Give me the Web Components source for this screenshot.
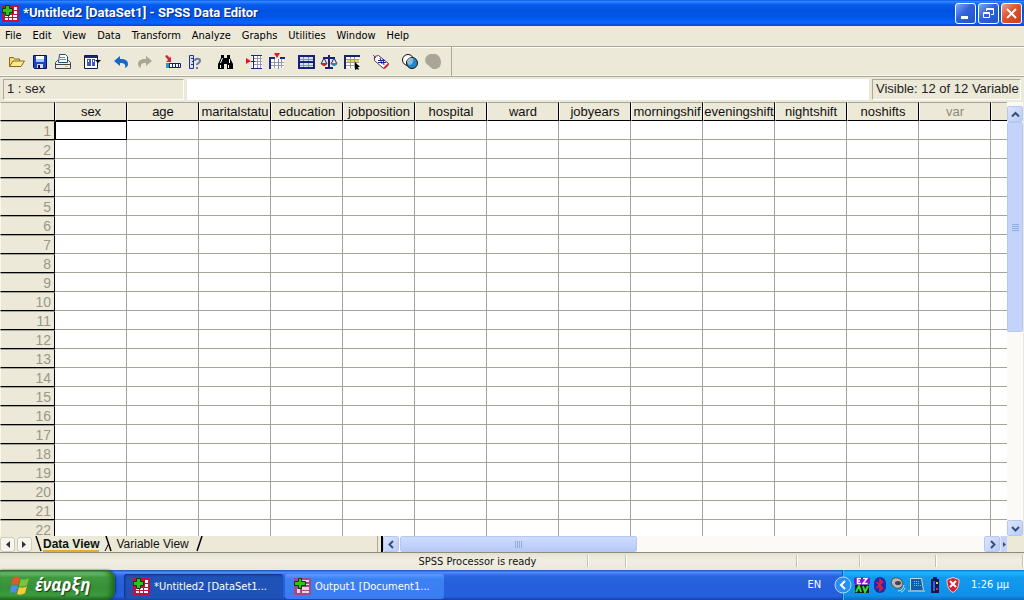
<!DOCTYPE html>
<html lang="en">
<head>
<meta charset="utf-8">
<title>SPSS Data Editor</title>
<style>
html, body { margin: 0; height: 100%; }
body { overflow: hidden; background: #ece9d8; }
</style>
</head>
<body>
<data-editor></data-editor>
<script>
const BASE = `*{box-sizing:border-box} button,input{font:inherit;color:inherit;margin:0;padding:0;border:0;background:none;border-radius:0} svg{display:block;flex:none}`;
function define(name, css, html) {
  customElements.define(name, class extends HTMLElement {
    constructor() {
      super();
      const t = document.createElement('template');
      t.innerHTML = `<style>${BASE}${css}</style>${typeof html === 'function' ? html(this) : html}`;
      this.attachShadow({ mode: 'open' }).append(t.content.cloneNode(true));
    }
  });
}

const APP = `<svg width="17" height="17" viewBox="0 0 17 17"><path fill="#c3113c" d="M0 0h17v17H0z"/><path fill="#fff" d="M3 10h3v2H3zM7 10h3v2H7zM11 10h4v2h-4zM3 13h3v2H3zM7 13h3v2H7zM11 13h4v2h-4zM12 6h3v3h-3zM12 2h3v3h-3z"/><path fill="#2ec41c" stroke="#063a06" d="M3.500.5h4v3h3v4h-3v3h-4v-3h-3v-4h3z"/></svg>`;
const OUT = `<svg width="17" height="17" viewBox="0 0 17 17"><path fill="#a04a88" d="M0 0h17v17H0z"/><path fill="#f6cfe0" d="M8 2h7v2H8zM11 6h4v1h-4zM3 11h3v4H3zM8 9h7v3H8zM8 13h7v2H8z"/><path fill="#2ec41c" stroke="#063a06" d="M4.500.5h3v3h4v4h-4v3h-3v-3h-4v-4h4z"/></svg>`;

/* ---------- title bar ---------- */
define('title-bar', `
:host{display:flex;align-items:center;height:26px;padding:0 2px;gap:4px;color:#fff;
 background:linear-gradient(#0a5be8 0,#2f86ff 6%,#0a5cf0 18%,#0053e1 40%,#0055ea 65%,#0a66ff 88%,#0044c8 100%);font:bold 13px/16px Roboto,"Open Sans",sans-serif}
h1{font:inherit;margin:0;flex:1;white-space:nowrap;text-shadow:1px 1px 0 #0a2a80}
.b{display:flex;gap:2px}
button{width:21px;height:21px;border:1px solid #fff;border-radius:3px;background:linear-gradient(135deg,#7ea6f4,#2f62dc 45%,#2152c8);display:grid;place-items:center}
.x{background:linear-gradient(135deg,#f0a088,#e0512c 45%,#c8401c)}`,
`${APP}<h1>*Untitled2 [DataSet1] - SPSS Data Editor</h1><div class="b">
<button aria-label="Minimize"><svg width="17" height="17"><path fill="#fff" d="M4 11h7v3H4z"/></svg></button>
<button aria-label="Restore"><svg width="17" height="17" fill="none" stroke="#fff"><path d="M6.500 6V3.500h7v6H11M6 4.500h8M3.500 7.500h6v5h-6zM3 8.500h7"/></svg></button>
<button class="x" aria-label="Close"><svg width="17" height="17"><path stroke="#fff" stroke-width="2" d="M4 4l9 9M13 4l-9 9"/></svg></button></div>`);

/* ---------- menu bar ---------- */
define('menu-bar', `
:host{display:block;font:11px/14px "DejaVu Sans Condensed","Liberation Sans",sans-serif;color:#000}
nav{display:flex;height:20px;align-items:center;gap:11px;padding:0 5px}
button{white-space:nowrap}`,
`<nav>${['File','Edit','View','Data','Transform','Analyze','Graphs','Utilities','Window','Help'].map(m => `<button>${m}</button>`).join('')}</nav>`);

/* ---------- toolbar ---------- */
const I = (label, body) => `<button aria-label="${label}"><svg width="18" height="18" viewBox="0 0 18 18" fill="none">${body}</svg></button>`;
const GROUPS = [
 [I('Open', '<path fill="#f5dc7c" stroke="#8a6a10" d="M1.500 13.500V4.500h4l1 1.500h5v2"/><path fill="#fbe99a" stroke="#8a6a10" d="M1.500 13.500L5 8h11.500l-3.500 5.500z"/>'),
  I('Save', '<path fill="#1848c8" stroke="#081060" d="M2.500 2.500h13v13h-12l-1-1z"/><path fill="#fff" d="M5 3h8v6H5z"/><path fill="#a8c8f0" d="M5 6h8v3H5z"/><path fill="#dde" d="M6 11h6v4H6z"/><path fill="#081060" d="M7 12h2v3H7z"/>'),
  I('Print', '<path fill="#eee" stroke="#444" d="M1.500 9.500l2-2h11l2 2v6h-15z"/><path fill="#fff" stroke="#205070" d="M4.500 9.500l1-8h6l2 2v6z"/><path stroke="#3aa0b0" d="M6 4.500h5M6 6.500h6"/><path stroke="#444" d="M2 11.500h14"/><path fill="#e0c040" d="M11 13h3v1h-3z"/>')],
 [I('Dialog recall', '<path fill="#fff" stroke="#101850" d="M1.500 2.500h13v13h-13z"/><path fill="#182888" d="M2 3h12v2H2z"/><path fill="#4058b8" d="M4 6h4v7H4zM9 6h3v7H9z"/><path fill="#fff" d="M5 7h1v2H5zM10 7h1v2h-1z"/><path fill="#000" d="M12 7h6l-3 3z"/>')],
 [I('Undo', '<path fill="#1768c8" d="M2 8l6-5v3c6 0 8 2 8 5 0 2-1 3-3 4 1-4-1-5-5-5v3z"/>'),
  I('Redo', '<path fill="#a9a698" d="M17 8l-6-5v3c-6 0-8 2-8 5 0 2 1 3 3 4-1-4 1-5 5-5v3z"/>')],
 [I('Go to case', '<path fill="#d02838" d="M1 3l2-1 3 3 1-2v6H2l2-2z"/><path fill="#fff" stroke="#102080" d="M2.500 10.500h14v4h-14zM5.500 10v5M8.500 10v5M11.500 10v5M14.500 10v5"/><path fill="#20a0c0" d="M2 10h3v5H2z"/>'),
  I('Variables', '<path fill="#dde" stroke="#203880" d="M2.500 2.500h4v13h-4zM4 5.500h3M5 8.500h2M4 11.500h3"/><path stroke="#6878a8" stroke-width="2" d="M8 8c0-3 5-3 5 0 0 2-3 2-3 4M10 14v2"/>')],
 [I('Find', '<path fill="#000" d="M5 2h3v3h3V2h3v3l3 6v5h-6v-5H8v5H2v-5l3-6z"/><path stroke="#fff" d="M6.500 5l-2 5M13.500 6v4M4.500 12v3M12.500 12v3"/>')],
 [I('Insert case', '<path fill="#e01828" d="M1 5l5 3-5 3z"/><path fill="#fff" d="M7 2h10v13H7z"/><path stroke="#9a9aa8" d="M9 5.500h8M9 8.500h8M9 11.500h8M12.500 2v14M15.500 2v14"/><path stroke="#182888" d="M6 2.500h11M8.500 2v13M6 8.500h4M6 15.500h11" />'),
  I('Insert variable', '<path fill="#fff" d="M3 6h13v9H3z"/><path stroke="#9a9aa8" d="M3 9.500h13M3 12.500h13M6.500 6v9M13.500 6v9"/><path stroke="#182888" stroke-width="2" d="M2 16V5h5M12 5h5"/><path stroke="#7a80b0" d="M10.500 6v10"/><path fill="#e01828" d="M6 0h6L9 5z"/>')],
 [I('Split file', '<path fill="#d8e4ec" stroke="#182078" stroke-width="2" d="M2 3h15v12H2zM2 9h15"/><path stroke="#8098a8" d="M3 6.500h13M3 12.500h13M6.500 4v4M11.500 4v4M6.500 10v4M11.500 10v4"/>'),
  I('Weight cases', '<path stroke="#182078" stroke-width="2" d="M9 2v12M5 15h8M3 5h12"/><path stroke="#182078" d="M4 5l-3 6h6zM14 5l-3 6h6z"/><path fill="#d02030" d="M1 10h6v1l-2 2H3z"/><path fill="#2090b8" d="M11 10h6v1l-2 2h-2z"/>'),
  I('Select cases', '<path fill="#fff" d="M2 3h14v12H2z"/><path fill="#e8d840" d="M4 7h12v2H4z"/><path stroke="#9a9a90" d="M3 6.500h13M3 9.500h13M3 12.500h13M7.500 3v12M11.500 3v12"/><path stroke="#182078" stroke-width="2" d="M2 16V3h15"/><path fill="#000" d="M12 9l5 5h-2l1 3-2-1-2 1z"/>')],
 [I('Value labels', '<path fill="#fff" stroke="#444" d="M2.500 3.500l4-1 10 8-5 5-9-8z"/><path fill="#d02838" d="M11 15l5-5 1 2-4 4z"/><path stroke="#182888" d="M8 5l2 6M11 6l1 6M6 7.500h7M6 9.500h8"/><path stroke="#c03030" d="M1 2l3 3"/>')],
 [I('Use sets', '<circle cx="7" cy="7" r="5.500" fill="#fff" stroke="#111"/><circle cx="11" cy="10" r="5.500" fill="#2088c8" stroke="#111"/><path fill="#90b8d0" d="M6 8c1-3 3-4 6-3 1 4-1 7-4 7-1-1-2-2-2-4z"/>'),
  I('Show all', '<path fill="#a9a698" d="M6 1h5c3 0 6 4 6 8 0 5-3 7-6 7-4 0-4-2-7-4-4-2-4-9 2-11z"/>')]
];
define('tool-bar', `
:host{display:block;border-top:1px solid #aca899;border-bottom:1px solid #aca899;box-shadow:inset 0 1px #fff,inset 0 -1px #f6f5ee;height:31px}
div{display:flex}.all{gap:6px;padding-left:5px;height:29px;align-items:center;width:max-content;border-right:1px solid #aca899;padding-right:7px}
button{width:23px;height:23px;display:grid;place-items:center}`,
`<div class="all" role="toolbar">${GROUPS.map(g => `<div>${g.join('')}</div>`).join('')}</div>`);

/* ---------- cell bar ---------- */
define('cell-bar', `
:host{display:flex;height:25px;padding:2px 3px;gap:3px;font:13px/18px "Liberation Sans",sans-serif;color:#222}
label,output{border:1px solid;border-color:#aca899 #fff #fff #aca899;padding-left:3px;white-space:nowrap;overflow:hidden}
label{width:181px}input{flex:1;min-width:0;background:#fff;padding:0 4px}output{width:149px}`,
`<label for="v">1 : sex</label><input id="v"><output>Visible: 12 of 12 Variable</output>`);

/* ---------- scroll bar ---------- */
const ARROW = { up: 'M4 9.500L7.500 6 11 9.500', down: 'M4 6l3.500 3.500L11 6', left: 'M9 4L5.500 7.500 9 11', right: 'M6 4l3.500 3.500L6 11' };
define('scroll-bar', `
:host{display:flex;background:#fbfaf6;min-width:0;min-height:0}
:host([vertical]){flex-direction:column}
button,.t{border:1px solid #fff;outline:1px solid #b4c8f0;outline-offset:-1px;border-radius:2px;background:linear-gradient(135deg,#dbe5fe,#b9cbf6);display:grid;place-items:center}
button{width:16px;height:16px;flex:none}
.t{flex:none;background:#c3d3fc}
:host([vertical]) .t{width:16px;height:210px}
:host(:not([vertical])) .t{width:237px;height:16px;background:linear-gradient(#cfdcfe,#c3d3fc 50%,#b6c8f4);margin-left:1px}
.s{flex:1}`,
 el => {
  const v = el.hasAttribute('vertical');
  const b = (d, l) => `<button aria-label="Scroll ${l}"><svg width="15" height="15"><path d="${d}" fill="none" stroke="#36507c" stroke-width="2"/></svg></button>`;
  const grip = v ? 'M0 .5h7M0 2.500h7M0 4.500h7M0 6.500h7' : 'M.5 0v7M2.500 0v7M4.500 0v7M6.500 0v7';
  return (v ? b(ARROW.up, 'up') : b(ARROW.left, 'left')) + `<div class="t"><svg width="7" height="7"><path d="${grip}" stroke="#93acdf"/></svg></div><div class="s"></div>` + (v ? b(ARROW.down, 'down') : b(ARROW.right, 'right'));
 });

/* ---------- grid ---------- */
const COLS = ['sex','age','maritalstatu','education','jobposition','hospital','ward','jobyears','morningshif','eveningshift','nightshift','noshifts','var',''];
define('data-grid', `
:host{display:block;overflow:hidden;background:#fff;font:13px/16px "Liberation Sans",sans-serif;color:#111;min-height:0}
table{border-collapse:separate;border-spacing:0;table-layout:fixed;width:1063px}
col{width:72px}col:first-child{width:55px}
th,td{height:19px;padding:0;overflow:hidden;white-space:nowrap;font-weight:normal}
td{border-right:1px solid #a6a498;border-bottom:1px solid #a6a498}
th{background:#ece9d8;border:1px solid;border-color:#a6a498 #000 #000 #f8f7f0}
tbody th{text-align:right;color:#9a978b;font-size:14px;padding-right:3px}
.n{color:#8c897c}
.sel{border:1px solid #000}`,
`<table><colgroup><col>${COLS.map(() => '<col>').join('')}</colgroup><thead><tr><th></th>${COLS.map(c => `<th scope="col"${c === 'var' ? ' class="n"' : ''}>${c}</th>`).join('')}</tr></thead><tbody>${
 Array.from({ length: 22 }, (_, r) => `<tr><th scope="row">${r + 1}</th>${COLS.map((c, i) => `<td${r + i === 0 ? ' class="sel"' : ''}></td>`).join('')}</tr>`).join('')}</tbody></table>`);

/* ---------- sheet tabs ---------- */
define('sheet-tabs', `
:host{display:flex;align-items:center;height:16px;font:12px/14px "Liberation Sans",sans-serif;color:#111}
.n{width:15px;height:15px;margin-right:2px;border:1px solid #d0cdbf;border-radius:3px;background:#f6f5ee;display:grid;place-items:center}
.tab{white-space:nowrap;height:15px}
.on{font-weight:bold;border-bottom:2px solid #e8a838}
.grow{flex:1}.split{width:6px;height:16px;border-left:1px solid #aca899;border-right:2px solid #000}`,
`<button class="n" aria-label="Previous sheet"><svg width="5" height="7"><path d="M5 0v7L1 3.500z" fill="#333"/></svg></button>
<button class="n" aria-label="Next sheet"><svg width="5" height="7"><path d="M0 0v7l4-3.500z" fill="#333"/></svg></button>
<svg width="9" height="16"><path d="M2 0l5 15" stroke="#000" stroke-width="1.500"/></svg>
<button class="tab on">Data View</button>
<svg width="17" height="16" fill="none" stroke="#000"><path d="M7 0l5 15" stroke-width="1.500"/><path d="M9.500 8L6 15"/></svg>
<button class="tab">Variable View</button>
<svg width="14" height="16"><path d="M13 0L8 15" stroke="#000" stroke-width="1.500"/></svg><span class="grow"></span><span class="split"></span>`);

/* ---------- status bar ---------- */
define('status-bar', `
:host{display:flex;height:18px;border-top:1px solid #8e8b80;padding:2px 1px 3px 0;background:linear-gradient(#e4e1d0,#f0eee2 40%,#ece9d8);font:11px/14px "DejaVu Sans Condensed","Liberation Sans",sans-serif;color:#111}
span{border-right:1px solid #c4c1b2;box-shadow:1px 0 #fff;white-space:nowrap;text-align:center}
.f{flex:1;border:0;box-shadow:none}.m{width:220px}.a{width:38px}.b{width:171px}.c{width:63px}.d{width:76px}.e{width:87px}`,
`<span class="f"></span><span class="m" role="status">SPSS Processor is ready</span><span class="a"></span><span class="b"></span><span class="c"></span><span class="d"></span><span class="e"></span>`);

/* ---------- task bar ---------- */
define('task-bar', `
:host{display:flex;height:30px;color:#fff;background:linear-gradient(#1f4fb8 0,#4590f8 8%,#2a66e0 20%,#245edb 55%,#2560e0 88%,#1941a5 100%);font:11px/14px "DejaVu Sans Condensed","Liberation Sans",sans-serif}
button{display:flex;align-items:center;white-space:nowrap}
.start{width:115px;padding-left:10px;gap:4px;margin-right:9px;border-radius:0 9px 9px 0;background:linear-gradient(#2a6e2a 0,#6cc06c 9%,#3f9a3f 25%,#379037 60%,#3c9c3c 85%,#256a25 100%);box-shadow:inset -4px 0 5px #1f6a1f,1px 0 2px #103080;font:italic bold 17px/22px "Noto Sans","Open Sans",sans-serif;text-shadow:1px 1px 1px #143a14}
.task{align-self:center;height:25px;padding:0 9px;gap:4px;border-radius:3px;margin:3px 2px 0 0;width:159px;background:linear-gradient(#5a9cff,#3c81f3 20%,#3a7cf0)}
.on{background:#1e52b7;box-shadow:inset 1px 1px 2px #10307c}
.lang{margin:auto 21px auto auto}
.tray{display:flex;align-items:center;padding-right:15px;background:linear-gradient(#1074c8 0,#20b4f8 8%,#129aee 25%,#1090e8 85%,#0f6cc0 100%);border-left:1px solid #0a5aa8;box-shadow:inset 1px 0 #40b8ff}
.tray .ch{margin-left:-9px;margin-right:2px}
.ic{display:flex;gap:2px;margin-right:10px}`,
`<button class="start"><svg width="21" height="21" viewBox="0 0 21 21"><path fill="#e8542c" d="M3 3c3-2 5-1 7 0L8 10C6 9 4 9 1 10z"/><path fill="#7cc43c" d="M11 4c2 1 5 1 8-1l-2 7c-3 2-6 2-8 1z"/><path fill="#4a90e8" d="M1 11c3-1 5-1 7 0l-2 7c-2-1-4-1-6 0z"/><path fill="#f8cc38" d="M9 12c2 1 5 1 8-1l-2 7c-3 2-6 2-8 1z"/></svg>έναρξη</button>
<button class="task on">${APP}*Untitled2 [DataSet1...</button><button class="task">${OUT}Output1 [Document1...</button>
<span class="lang">EN</span>
<div class="tray"><button class="ch" aria-label="Hide icons"><svg width="18" height="18"><circle cx="9" cy="9" r="8" fill="#2c8cf0" stroke="#a8dcff"/><path d="M11 5L7 9l4 4" stroke="#fff" stroke-width="2" fill="none"/></svg></button>
<div class="ic">
<svg width="16" height="16"><rect width="16" height="8" rx="3" fill="#7a18c8"/><path stroke="#fff" fill="none" stroke-width="1.500" d="M7 1.500H3.500v5H7M3.500 4H6M9 1.500h4l-4 5h4.500"/><path fill="#102010" d="M1 8h14v8H1z"/><path stroke="#38d838" stroke-width="2" fill="none" d="M2 15l3-6 2 6M9 9l2 6 3-6"/></svg>
<svg width="16" height="16"><rect x="2" width="12" height="16" rx="6" fill="#1830b0"/><path stroke="#f01838" stroke-width="1.500" fill="none" d="M4.500 5l6 6L8 13.500v-11L10.500 5l-6 6"/></svg>
<svg width="16" height="16"><ellipse cx="7" cy="6" rx="6" ry="5" transform="rotate(30 7 6)" fill="#b8b8b8" stroke="#555"/><ellipse cx="8" cy="6" rx="3" ry="2" fill="#444"/><path stroke="#d0e0e8" fill="none" d="M8 14c3 0 5-2 6-6M11 15c2 0 3-2 4-4"/></svg>
<svg width="17" height="16"><path fill="#1060a8" stroke="#c0d8e8" d="M2.500 1.500h11l2 12h-13z"/><path stroke="#68c0f0" stroke-dasharray="1 1" d="M6 4.500h6M6 6.500h6M6 8.500h7"/><path fill="#8ab0c8" d="M0 13h17v2H0z"/></svg>
<svg width="16" height="16"><path fill="#101850" d="M4 2h2V0h4v2h2v14H4z"/><path fill="#3060f0" d="M6 4h2v10H6z"/><path fill="#f0d020" d="M9 5h2v2H9z"/><path fill="#e03030" d="M9 11h2v2H9z"/></svg>
<svg width="16" height="16"><path fill="#d82030" stroke="#f0d0d0" d="M8 .5l6 2c0 6-1 10-6 13-5-3-6-7-6-13z"/><path stroke="#fff" stroke-width="2" d="M5 4l6 6M11 4l-6 6"/></svg>
</div><time>1:26 μμ</time></div>`);

/* ---------- window ---------- */
define('data-editor', `
:host{display:flex;flex-direction:column;height:100vh;min-height:240px;background:#ece9d8}
.mid{flex:1;min-height:0;display:grid;grid-template-columns:minmax(0,1fr) 16px;grid-template-rows:minmax(0,1fr) 16px;padding-right:1px}
.mid>scroll-bar{padding-top:4px}
.low{display:flex;min-width:0}
sheet-tabs{width:383px;flex:none}.low scroll-bar{flex:1}
.more{width:6px;background:#c3d3fc;margin-left:1px;display:grid;place-items:center}`,
`<title-bar></title-bar><menu-bar></menu-bar><tool-bar></tool-bar><cell-bar></cell-bar>
<div class="mid"><data-grid></data-grid><scroll-bar vertical></scroll-bar>
<div class="low"><sheet-tabs></sheet-tabs><scroll-bar></scroll-bar><button class="more" aria-label="Split"><svg width="3" height="5"><path d="M0 0v5l3-2.500z" fill="#36507c"/></svg></button></div><span></span></div>
<status-bar></status-bar><task-bar></task-bar>`);
</script>
</body>
</html>
